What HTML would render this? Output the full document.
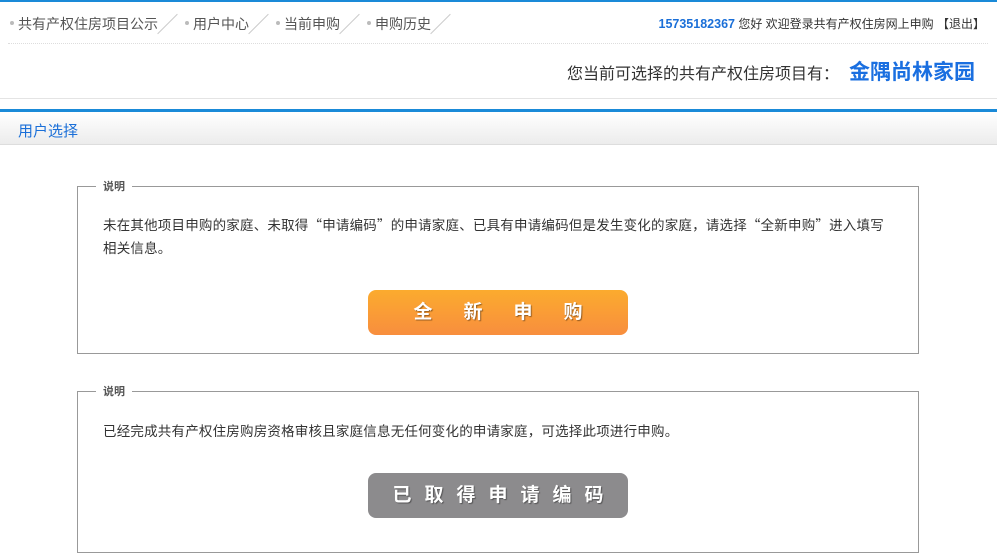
<!DOCTYPE html>
<html><head><meta charset="utf-8"><style>
*{margin:0;padding:0;box-sizing:border-box}
body{width:997px;height:534px;overflow:hidden;background:#fff;font-family:"Liberation Sans","Noto Sans CJK SC",sans-serif;position:relative;color:#333}
.a{position:absolute;white-space:nowrap}
.nav{top:14px;font-size:14px;color:#555}
.dot{display:inline-block;width:4px;height:4px;border-radius:2px;background:#bbb;vertical-align:middle;margin-right:4px;position:relative;top:-2px}
.sl{position:absolute;top:10px;width:1px;height:28px;background:#ccc;transform:rotate(45deg)}
fieldset{position:absolute;left:77px;width:842px;border:1px solid #999;border-bottom:1px solid #999}
legend{margin-left:18px;padding:0 7px;font-size:11px;font-weight:bold;color:#555}
.p{font-family:"Noto Sans CJK SC",sans-serif;font-size:13.5px;line-height:23px;color:#333;position:absolute;left:103px;letter-spacing:0.2px}
.btn{position:absolute;left:368px;width:260px;height:45px;border-radius:8px;color:#fff;font-weight:bold;font-size:19px;text-align:center;line-height:45px;text-shadow:1px 1px 1px rgba(0,0,0,.4)}
</style></head><body>
<div class="a" style="left:0;top:0;width:997px;height:2px;background:#1a8ad8"></div>
<div class="a nav" style="left:10px"><span class="dot"></span>共有产权住房项目公示</div>
<div class="sl" style="left:167px"></div>
<div class="a nav" style="left:185px"><span class="dot"></span>用户中心</div>
<div class="sl" style="left:258px"></div>
<div class="a nav" style="left:276px"><span class="dot"></span>当前申购</div>
<div class="sl" style="left:349px"></div>
<div class="a nav" style="left:367px"><span class="dot"></span>申购历史</div>
<div class="sl" style="left:440px"></div>
<div class="a" style="right:12px;top:15px;font-size:12px;color:#333"><b style="color:#1a6fd8;font-size:12.5px">15735182367</b> 您好 欢迎登录共有产权住房网上申购 【退出】</div>
<div class="a" style="left:8px;top:43px;width:980px;border-top:1px dotted #ddd"></div>
<div class="a" style="right:22px;top:56px;font-size:16px;color:#333">您当前可选择的共有产权住房项目有：<b style="color:#1a6fe0;font-size:21px;margin-left:10px">金隅尚林家园</b></div>
<div class="a" style="left:0;top:98px;width:997px;height:1px;background:#e4e4e4"></div>
<div class="a" style="left:0;top:109px;width:997px;height:3px;background:#1a8ad8"></div>
<div class="a" style="left:0;top:112px;width:997px;height:33px;background:linear-gradient(#fff,#ececec);border-bottom:1px solid #ddd"></div>
<div class="a" style="left:18px;top:120px;font-size:15px;color:#1a6fd8">用户选择</div>
<fieldset style="top:178px;height:176px"><legend>说明</legend></fieldset>
<div class="p" style="top:213px;width:785px;white-space:normal">未在其他项目申购的家庭、未取得“申请编码”的申请家庭、已具有申请编码但是发生变化的家庭，请选择“全新申购”进入填写<br>相关信息。</div>
<div class="btn" style="top:290px;background:linear-gradient(#fbab2e,#f88e3e);letter-spacing:31px;text-indent:31px">全新申购</div>
<fieldset style="top:383px;height:170px"><legend>说明</legend></fieldset>
<div class="p" style="top:419px">已经完成共有产权住房购房资格审核且家庭信息无任何变化的申请家庭，可选择此项进行申购。</div>
<div class="btn" style="top:473px;background:#8c8b8d;letter-spacing:13px;text-indent:13px">已取得申请编码</div>
</body></html>
